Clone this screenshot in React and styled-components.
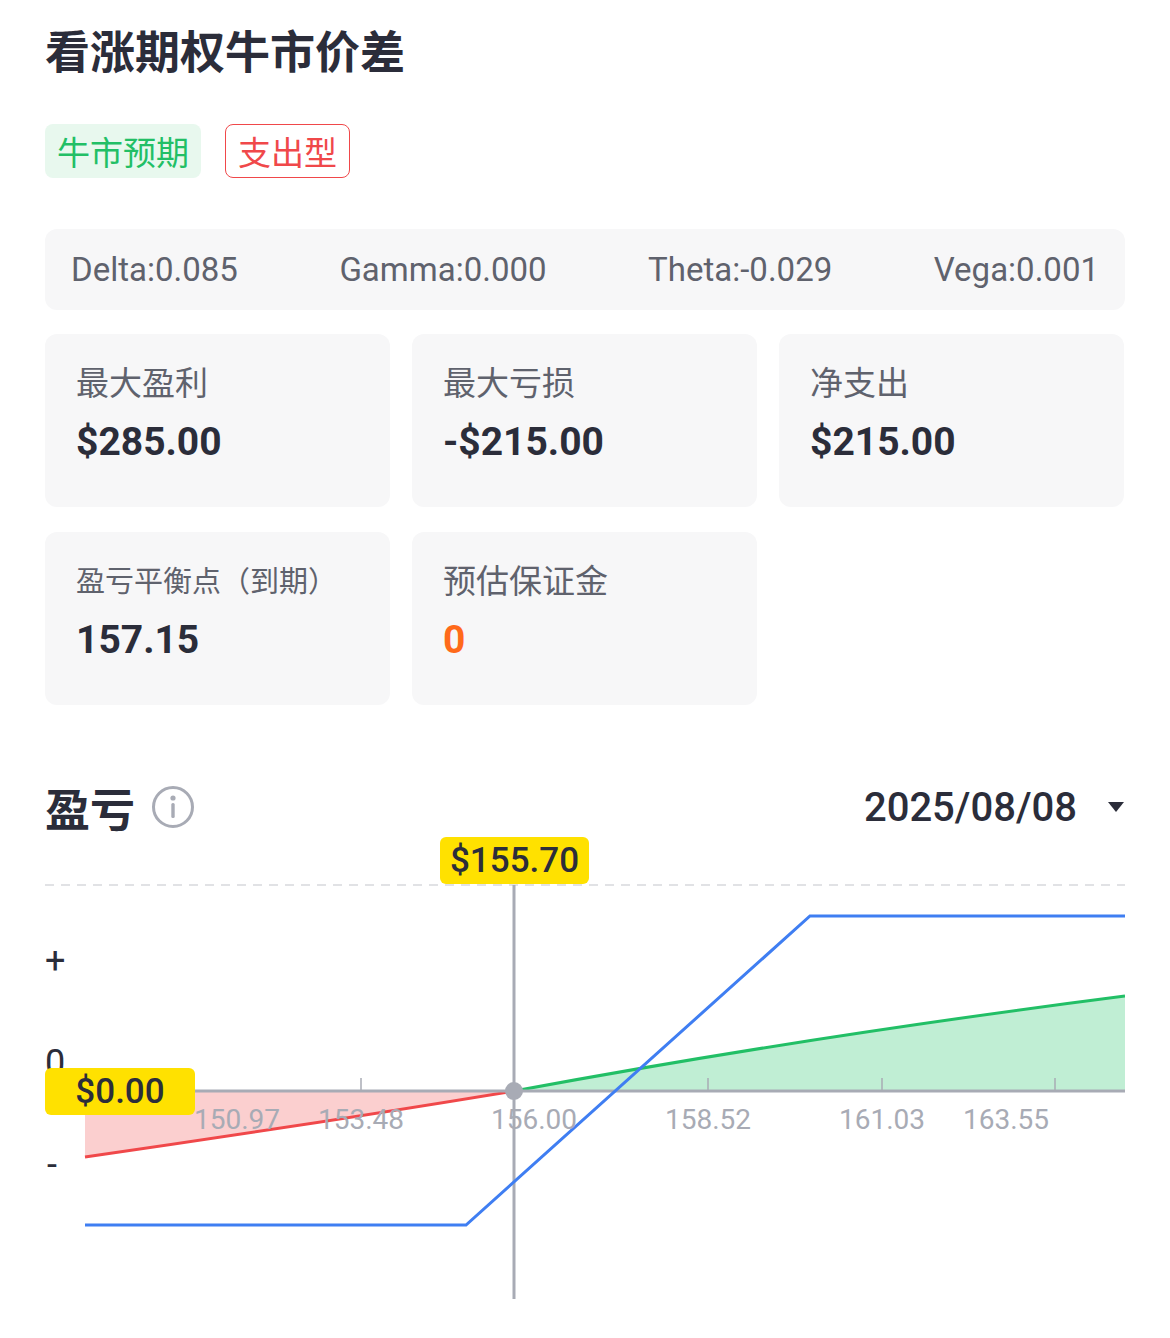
import React from "react";
import styled, { createGlobalStyle } from "styled-components";

const G = createGlobalStyle`
  body{margin:0;background:#fff;font-family:Roboto,"Noto Sans CJK SC",sans-serif;color:#2b2d3a;}
`;
const Page = styled.div`padding:22px 45px 0;width:1080px;`;
const Title = styled.h1`margin:0;font-size:45px;font-weight:700;line-height:64px;color:#2b2d3a;`;
const Tags = styled.div`display:flex;gap:24px;margin-top:38px;`;
const Tag = styled.span`
  display:inline-flex;align-items:center;height:54px;padding:0 12px;border-radius:8px;font-size:33px;box-sizing:border-box;
  ${p=>p.$red?`color:#f0484a;border:1.5px solid #f0484a;background:#fff;`:`color:#22bf66;background:#e8f8ee;`}
`;
const Greeks = styled.div`margin-top:51px;height:81px;background:#f7f7f8;border-radius:12px;display:flex;justify-content:space-between;align-items:center;padding:0 26px;font-size:33px;color:#5f626d;`;
const Grid = styled.div`display:grid;grid-template-columns:repeat(3,345px);gap:25px 22px;margin-top:24px;`;
const Card = styled.div`background:#f7f7f8;border-radius:12px;height:173px;padding:26px 31px;box-sizing:border-box;`;
const Label = styled.div`font-size:${p=>p.$sm?29:33}px;color:#5f626d;line-height:48px;`;
const Value = styled.div`font-size:39px;font-weight:700;line-height:56px;margin-top:6px;color:${p=>p.$c||"#2b2d3a"};`;
const Head = styled.div`display:flex;align-items:center;justify-content:space-between;margin-top:72px;height:60px;`;
const HL = styled.div`display:flex;align-items:center;gap:16px;font-size:45px;font-weight:700;`;
const Date = styled.div`display:flex;align-items:center;gap:30px;font-size:40px;font-weight:500;`;
const Chart = styled.div`position:relative;margin-top:-5px;height:470px;`;
const Badge = styled.div`position:absolute;background:#ffe100;border-radius:6px;font-size:35px;font-weight:500;height:47px;display:flex;align-items:center;justify-content:center;color:#2b2d3a;`;

export default function App(){
  const ax="#a8abb5";
  return <Page><G/>
    <Title>看涨期权牛市价差</Title>
    <Tags><Tag>牛市预期</Tag><Tag $red>支出型</Tag></Tags>
    <Greeks><span>Delta:0.085</span><span>Gamma:0.000</span><span>Theta:-0.029</span><span>Vega:0.001</span></Greeks>
    <Grid>
      <Card><Label>最大盈利</Label><Value>$285.00</Value></Card>
      <Card><Label>最大亏损</Label><Value>-$215.00</Value></Card>
      <Card><Label>净支出</Label><Value>$215.00</Value></Card>
      <Card><Label $sm>盈亏平衡点（到期）</Label><Value>157.15</Value></Card>
      <Card><Label>预估保证金</Label><Value $c="#ff6a1a">0</Value></Card>
    </Grid>
    <Head>
      <HL>盈亏<svg width="44" height="44" viewBox="0 0 44 44"><circle cx="22" cy="22" r="19.5" fill="none" stroke={ax} strokeWidth="3"/><circle cx="22" cy="13" r="2.6" fill={ax}/><rect x="20.3" y="18" width="3.4" height="15" rx="1.5" fill={ax}/></svg></HL>
      <Date>2025/08/08<svg width="18" height="12" viewBox="0 0 18 12"><path d="M1 1h16L9 11z" fill="#2b2d3a"/></svg></Date>
    </Head>
    <Chart>
      <svg width="1080" height="470" viewBox="0 0 1080 470">
        <line x1="0" y1="53" x2="1080" y2="53" stroke="#d8d9dd" strokeWidth="1.5" strokeDasharray="9 7"/>
        <path d="M40 259 L40 325 Q250 295 469 259 Z" fill="#fbcfcf"/>
        <path d="M40 325 Q250 295 469 259" fill="none" stroke="#f0484a" strokeWidth="3"/>
        <path d="M469 259 Q760 205 1080 164 L1080 259 Z" fill="#c0eed4"/>
        <path d="M469 259 Q760 205 1080 164" fill="none" stroke="#22bf66" strokeWidth="3"/>
        <line x1="0" y1="259" x2="1080" y2="259" stroke={ax} strokeWidth="3"/>
        {[316,663,837,1010].map(x=><line key={x} x1={x} y1="246" x2={x} y2="259" stroke={ax} strokeWidth="1.5"/>)}
        <line x1="469" y1="53" x2="469" y2="467" stroke={ax} strokeWidth="3"/>
        <polyline points="40,393 421,393 765,84 1080,84" fill="none" stroke="#3f7ef2" strokeWidth="3"/>
        <circle cx="469" cy="259" r="9" fill={ax}/>
        <g fontSize="28" fill={ax} textAnchor="middle" fontFamily="Roboto">
          <text x="192" y="297">150.97</text><text x="316" y="297">153.48</text><text x="489" y="297">156.00</text>
          <text x="663" y="297">158.52</text><text x="837" y="297">161.03</text><text x="961" y="297">163.55</text>
        </g>
        <g fontSize="36" fill="#2b2d3a" fontFamily="Roboto">
          <text x="0" y="141">+</text><text x="0" y="243">0</text><text x="2" y="345">-</text>
        </g>
      </svg>
      <Badge style={{left:395,top:5,width:149}}>$155.70</Badge>
      <Badge style={{left:0,top:236,width:150}}>$0.00</Badge>
    </Chart>
  </Page>;
}
